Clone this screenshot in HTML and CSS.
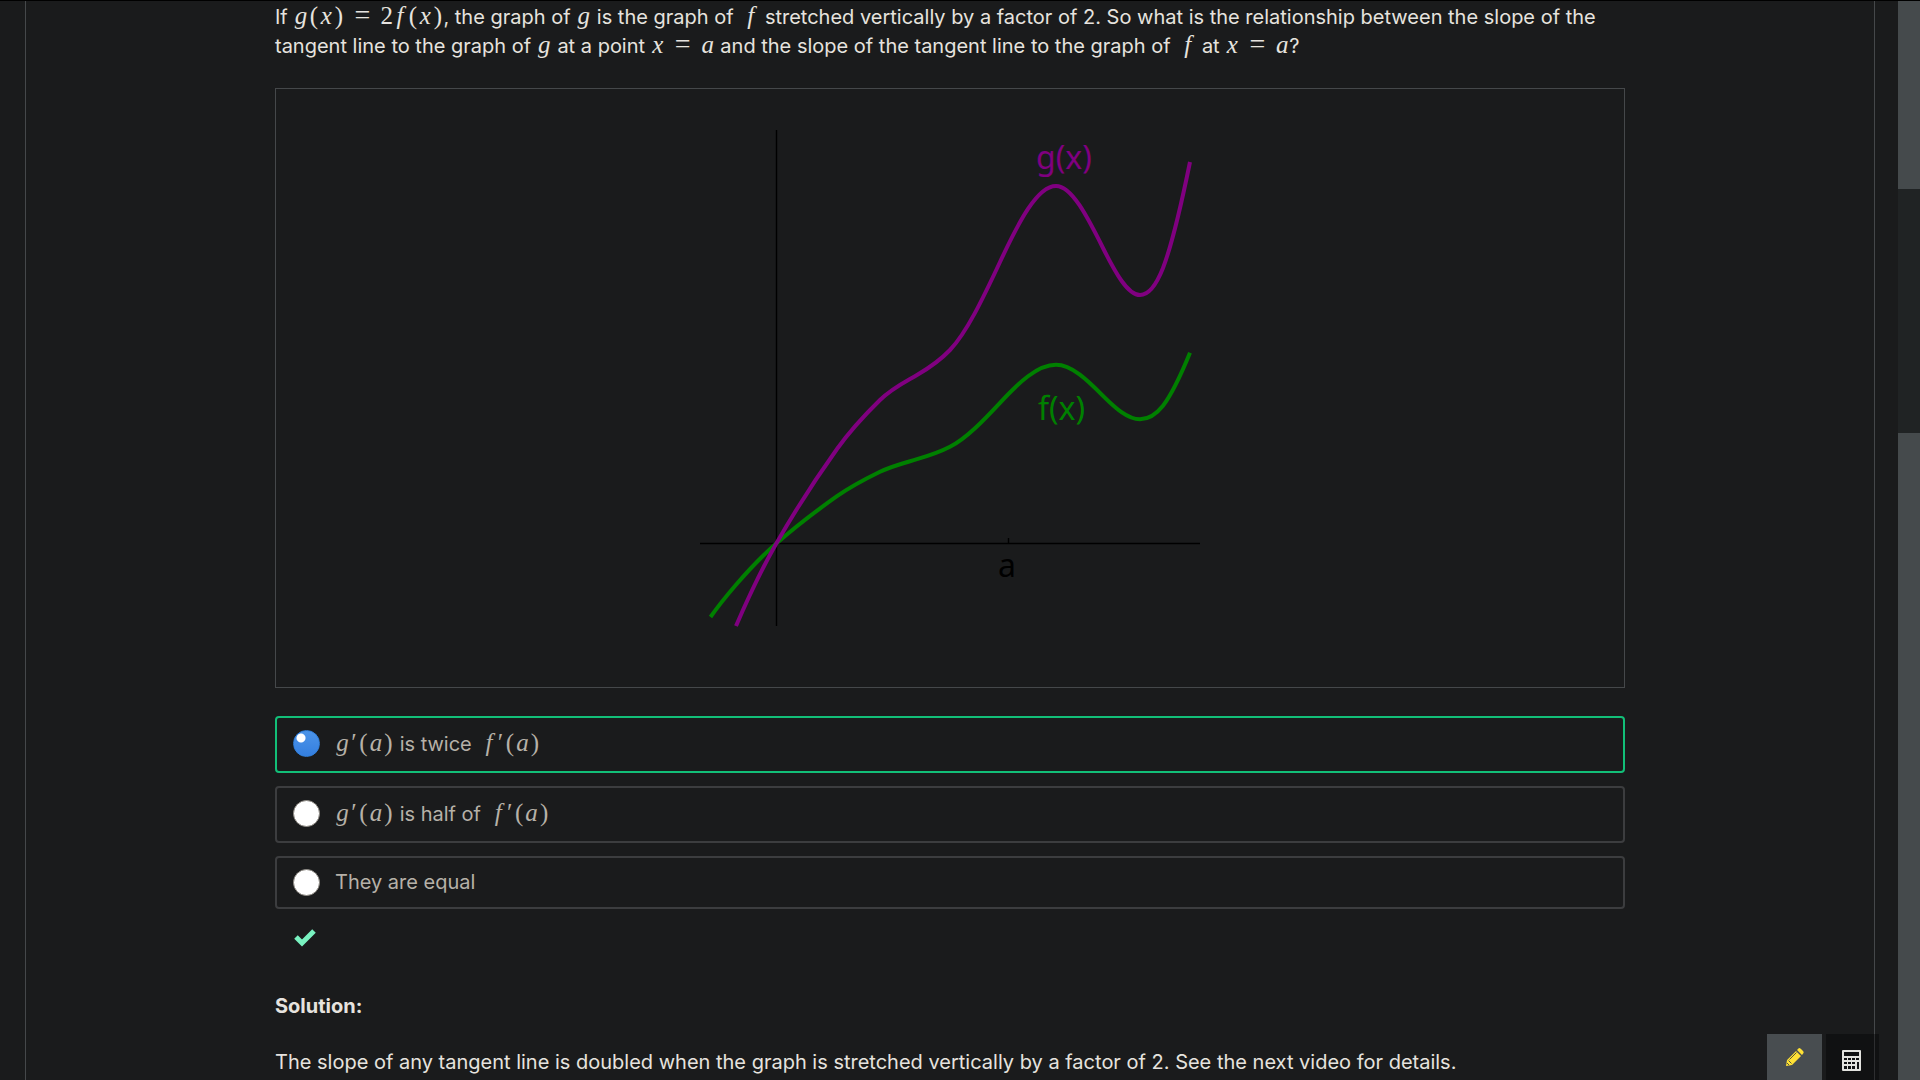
FILE: index.html
```html
<!DOCTYPE html>
<html lang="en">
<head>
<meta charset="utf-8">
<title>Stretched functions and slopes</title>
<link rel="stylesheet" href="styles.css">
</head>
<body>
<div class="page">
  <div class="viewport">
    <main class="frame">
      <form class="problem">
        <p class="question">If <span class="math"><i class="g">g</i><span class="paren">(</span><i class="x">x</i><span class="paren">)</span><span class="eq">=</span><span class="num">2</span><i class="f">f</i><span class="paren">(</span><i class="x">x</i><span class="paren">)</span></span>, the graph of <span class="math"><i class="g">g</i></span> is the graph of <span class="math lead"><i class="f">f</i></span> stretched vertically by a factor of 2. So what is the relationship between the slope of the tangent line to the graph of <span class="math"><i class="g">g</i></span> at a point <span class="math"><i class="x">x</i><span class="eq">=</span><i class="a">a</i></span> and the slope of the tangent line to the graph of <span class="math lead"><i class="f">f</i></span> at <span class="math"><i class="x">x</i><span class="eq">=</span><i class="a">a</i></span>?</p>
        <figure class="figure">
          <svg class="plot" viewBox="0 0 500 500" role="img" aria-label="Graphs of f(x) and g(x)">
            <path class="axis" d="M76.5 0V496M0 413.5H500M308.5 408V413"/>
            <path class="curve curve-f" d="M10.5 487C19 475 27.5 464.700 36 454.800C49.300 439.400 62.700 425.400 76 413.800C96.300 396 116.700 380.500 137 366.200C151.300 356.200 165.700 348.800 180 341.800C192.300 335.800 204.700 332.900 217 329.200C228 326 239 322.500 250 316.800C266.700 308 283.300 290.700 300 272.800C318.700 252.700 337.300 234.800 356 234.800C371.700 234.800 387.300 250 403 265.800C415.300 278 427.700 289.300 440 289.300C447.700 289.300 455.300 285.500 463 275.800C472 264 481 244.800 490 222.800"/>
            <path class="curve curve-g" d="M36 496C49.300 465.300 62.700 437.300 76 414C96.300 378.500 116.700 347.400 137 319C151.300 299 165.700 284 180 270C192.300 258 204.700 252.200 217 245C228 238.600 239 231.500 250 220C266.700 202.500 283.300 167.800 300 132C318.700 91.800 337.300 56 356 56C371.700 56 387.300 86.600 403 118C415.300 142.600 427.700 165 440 165C447.700 165 455.300 157.500 463 138C472 114.600 481 76.100 490 32"/>
            <text class="label label-g" x="336" y="39">g(x)</text>
            <text class="label label-f" x="338" y="290">f(x)</text>
            <text class="label" x="298" y="447">a</text>
          </svg>
        </figure>
        <div class="choices">
          <label class="choice correct"><input type="radio" name="slope" checked><span><span class="math"><i class="g">g</i><span class="prime">′</span><span class="paren">(</span><i class="a">a</i><span class="paren">)</span></span> is twice <span class="math lead"><i class="f">f</i><span class="prime">′</span><span class="paren">(</span><i class="a">a</i><span class="paren">)</span></span></span></label>
          <label class="choice"><input type="radio" name="slope"><span><span class="math"><i class="g">g</i><span class="prime">′</span><span class="paren">(</span><i class="a">a</i><span class="paren">)</span></span> is half of <span class="math lead"><i class="f">f</i><span class="prime">′</span><span class="paren">(</span><i class="a">a</i><span class="paren">)</span></span></span></label>
          <label class="choice plain"><input type="radio" name="slope"><span>They are equal</span></label>
        </div>
        <svg class="check" viewBox="0 0 22 18" role="img" aria-label="Correct"><path d="M2 8L8 14L20 2"/></svg>
        <h2 class="heading">Solution:</h2>
        <p class="solution">The slope of any tangent line is doubled when the graph is stretched vertically by a factor of 2. See the next video for details.</p>
      </form>
    </main>
  </div>
  <div class="scrollbar"><div class="thumb"></div></div>
</div>
<div class="tools">
  <button class="tool notes" type="button" aria-label="Notes">
    <svg width="18" height="18" viewBox="0 0 18 18"><path fill="#ffe135" d="M0 18L1 12L10 3L15 8L6 17ZM11 2L13 0Q14 0 15 1L17 3Q18 4 17.500 5L16 7Z"/><path d="M2.500 12.500L5.500 15.500M3.500 11.500L10.500 4.500" stroke="#54583a"/><path d="M1 15L3 17" stroke="#54583a"/></svg>
  </button>
  <button class="tool calc" type="button" aria-label="Calculator">
    <svg width="19" height="21" viewBox="0 0 19 21"><rect width="19" height="21" rx="1" fill="#e3e3df"/><path fill="#111213" d="M2 2h15v4H2zM2 8h3v2H2zM6 8h3v2H6zM10 8h3v2h-3zM14 8h3v2h-3zM2 12h3v2H2zM6 12h3v2H6zM10 12h3v2h-3zM2 16h3v3H2zM6 16h3v3H6zM10 16h3v3h-3zM15 12h2v7h-2z"/></svg>
  </button>
</div>
</body>
</html>
```
FILE: styles.css
```css
* { box-sizing: border-box; }

body {
  margin: 0;
  background: #1a1b1c;
  color: #e6e3df;
  font: 20px/29px Inter, sans-serif;
}

.page {
  display: grid;
  grid-template-columns: 1fr 22px;
  height: 100vh;
  overflow: hidden;
  border-top: 1px solid #000;
}

.viewport {
  padding: 0 23px 0 25px;
  overflow: hidden;
}

.frame {
  min-height: 100%;
  padding: 0 249px;
  border: solid #45484a;
  border-width: 0 1px;
}

.question { margin: 0 0 27px; padding-top: 2px; }

.figure {
  display: flex;
  justify-content: center;
  margin: 0 0 28px;
  padding: 41px 0 57px;
  border: 1px solid #45484a;
}

.plot { width: 500px; height: 500px; }
.axis { fill: none; stroke: #000; stroke-width: 1.4; }
.curve { fill: none; stroke-width: 4; }
.curve-f { stroke: #008000; }
.curve-g { stroke: #800080; }
.label { font: 32px "Noto Sans", sans-serif; fill: #000; }
.label-f { fill: #008000; }
.label-g { fill: #800080; }

.math {
  display: inline-block;
  font: 25px/20px "Liberation Serif", serif;
  white-space: nowrap;
}
.math > * { display: inline-block; text-align: center; }
.lead { margin: 0 1px 0 4px; }
.x, .a { width: 14px; }
.g, .f { width: 15px; }
.num { width: 12px; }
.eq { width: 36px; font-size: 28px; }
.paren { width: 11px; }
.prime { width: 8px; }

.choices {
  display: grid;
  gap: 13px;
}

.choice {
  display: flex;
  align-items: center;
  gap: 15px;
  min-height: 57px;
  padding: 0 16px;
  border: 2px solid #3c3d3f;
  border-radius: 4px;
  color: #b6b1a8;
}
.correct { border-color: #12bf78; }
.plain { min-height: 53px; }

.choice input {
  appearance: none;
  width: 27px;
  height: 27px;
  margin: 0 0 3px;
  border: 1px solid #8d8982;
  border-radius: 50%;
  background: #fff;
}
.choice input:checked {
  border-color: #3180dc;
  background: radial-gradient(circle at 7px 7px, #fff 4px, transparent 5px), linear-gradient(#4c94e8, #347fe0);
}
.plain input { margin: 0; }

.check {
  display: block;
  width: 22px;
  height: 18px;
  margin: 20px 0 45px 19px;
  fill: none;
  stroke: #79f2c0;
  stroke-width: 5;
}

.heading { margin: 0 0 27px; font-size: 20px; line-height: 29px; font-weight: 700; }
.solution { margin: 0; }

.scrollbar {
  display: grid;
  grid-template-rows: 188fr 244fr 647fr;
  background: #454a4c;
}
.thumb { grid-row: 2; background: #202324; }

.tools {
  position: fixed;
  right: 41px;
  bottom: 0;
  display: flex;
  gap: 4px;
}
.tool {
  height: 46px;
  padding: 0;
  border: 0;
}
.tool svg { display: block; margin: auto; fill: none; }
.notes { width: 55px; background: #484d50; }
.calc { width: 53px; padding: 7px 2px 0 0; background: rgba(0, 0, 0, 0.35); }
```
